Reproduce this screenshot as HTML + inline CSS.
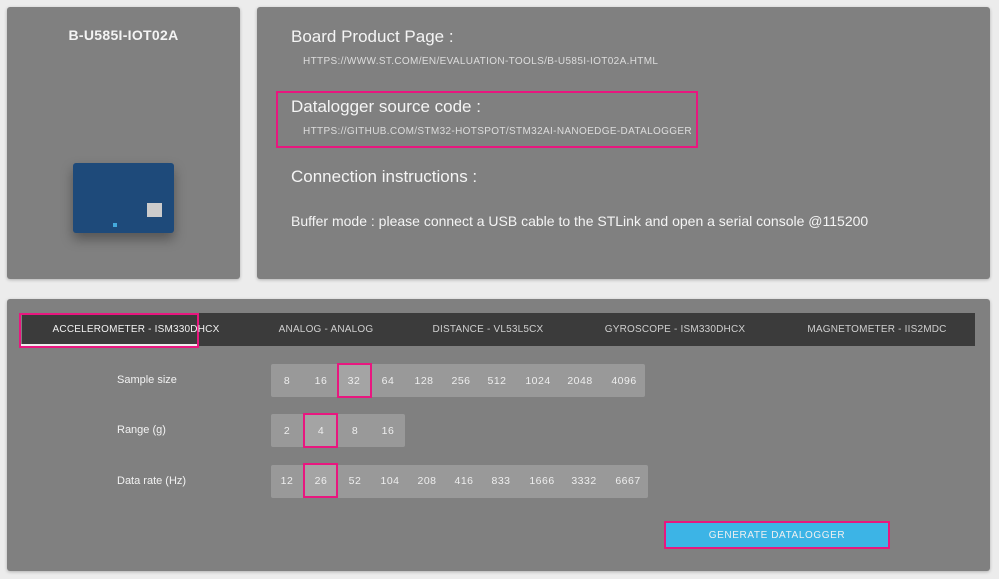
<!DOCTYPE html>
<html><head><meta charset="utf-8"><style>
*{margin:0;padding:0;box-sizing:border-box}
body{width:999px;height:579px;background:#ececec;position:relative;overflow:hidden;font-family:"Liberation Sans",sans-serif;color:#f2f2f2}
.a{position:absolute;white-space:nowrap}
.card{background:#808080;border-radius:3px;box-shadow:0 1px 3px rgba(0,0,0,.25)}
.h{font-size:17px;color:#f4f4f4}
.u{font-size:10px;letter-spacing:.35px;color:#ddd}
.tab{font-size:10px;letter-spacing:.2px;color:#cfcfcf;top:324px;transform:translateX(-50%)}
.row{background:#999;border-radius:2px;height:33px}
.n{font-size:10.5px;color:#eee;transform:translateX(-50%);letter-spacing:.5px}
.sel{border:2px solid #e8177f;background:#a4a4a4;height:35px}
.lbl{font-size:11px;color:#f2f2f2;left:117px}
</style></head><body>
<div class="a card" style="left:7px;top:7px;width:233px;height:272px"></div>
<div class="a" style="left:7px;top:27px;width:233px;text-align:center;font-size:14px;font-weight:bold;color:#f4f4f4;letter-spacing:.3px">B-U585I-IOT02A</div>
<div class="a" style="left:73px;top:163px;width:101px;height:70px;background:#1e4a7a;border-radius:3px;box-shadow:0 6px 12px rgba(0,0,0,.35)"></div>
<div class="a" style="left:147px;top:203px;width:15px;height:14px;background:#ccc"></div>
<div class="a" style="left:113px;top:223px;width:4px;height:4px;background:#4ad"></div>

<div class="a card" style="left:257px;top:7px;width:733px;height:272px"></div>
<div class="a h" style="left:291px;top:27px">Board Product Page :</div>
<div class="a u" style="left:303px;top:56px">HTTPS://WWW.ST.COM/EN/EVALUATION-TOOLS/B-U585I-IOT02A.HTML</div>
<div class="a" style="left:276px;top:91px;width:422px;height:57px;border:2px solid #e8177f"></div>
<div class="a h" style="left:291px;top:97px">Datalogger source code :</div>
<div class="a u" style="left:303px;top:126px">HTTPS://GITHUB.COM/STM32-HOTSPOT/STM32AI-NANOEDGE-DATALOGGER</div>
<div class="a h" style="left:291px;top:167px">Connection instructions :</div>
<div class="a" style="left:291px;top:213px;font-size:14px;color:#f4f4f4">Buffer mode : please connect a USB cable to the STLink and open a serial console @115200</div>

<div class="a card" style="left:7px;top:299px;width:983px;height:272px"></div>
<div class="a" style="left:22px;top:313px;width:953px;height:33px;background:#3b3b3b"></div>
<div class="a" style="left:19px;top:313px;width:180px;height:35px;border:2px solid #e8177f"></div>
<div class="a" style="left:21px;top:344px;width:176px;height:2px;background:#eee"></div>
<div class="a tab" style="left:136px;color:#f2f2f2">ACCELEROMETER - ISM330DHCX</div>
<div class="a tab" style="left:326px">ANALOG - ANALOG</div>
<div class="a tab" style="left:488px">DISTANCE - VL53L5CX</div>
<div class="a tab" style="left:675px">GYROSCOPE - ISM330DHCX</div>
<div class="a tab" style="left:877px">MAGNETOMETER - IIS2MDC</div>

<div class="a lbl" style="top:374px">Sample size</div>
<div class="a row" style="left:271px;top:364px;width:374px"></div>
<div class="a sel" style="left:337px;top:363px;width:35px"></div>
<div class="a lbl" style="top:424px">Range (g)</div>
<div class="a row" style="left:271px;top:414px;width:134px"></div>
<div class="a sel" style="left:303px;top:413px;width:35px"></div>
<div class="a lbl" style="top:475px">Data rate (Hz)</div>
<div class="a row" style="left:271px;top:465px;width:377px"></div>
<div class="a sel" style="left:303px;top:463px;width:35px"></div>

<div class="a n" style="left:287px;top:375px">8</div><div class="a n" style="left:321px;top:375px">16</div><div class="a n" style="left:354px;top:375px">32</div><div class="a n" style="left:388px;top:375px">64</div><div class="a n" style="left:424px;top:375px">128</div><div class="a n" style="left:461px;top:375px">256</div><div class="a n" style="left:497px;top:375px">512</div><div class="a n" style="left:538px;top:375px">1024</div><div class="a n" style="left:580px;top:375px">2048</div><div class="a n" style="left:624px;top:375px">4096</div>
<div class="a n" style="left:287px;top:425px">2</div><div class="a n" style="left:321px;top:425px">4</div><div class="a n" style="left:355px;top:425px">8</div><div class="a n" style="left:388px;top:425px">16</div>
<div class="a n" style="left:287px;top:475px">12</div><div class="a n" style="left:321px;top:475px">26</div><div class="a n" style="left:355px;top:475px">52</div><div class="a n" style="left:390px;top:475px">104</div><div class="a n" style="left:427px;top:475px">208</div><div class="a n" style="left:464px;top:475px">416</div><div class="a n" style="left:501px;top:475px">833</div><div class="a n" style="left:542px;top:475px">1666</div><div class="a n" style="left:584px;top:475px">3332</div><div class="a n" style="left:628px;top:475px">6667</div>

<div class="a" style="left:664px;top:521px;width:226px;height:28px;background:#3cb4e6;border:2px solid #e8177f;text-align:center;font-size:10px;letter-spacing:.6px;line-height:26px;color:#f0f0f0">GENERATE DATALOGGER</div>
</body></html>
